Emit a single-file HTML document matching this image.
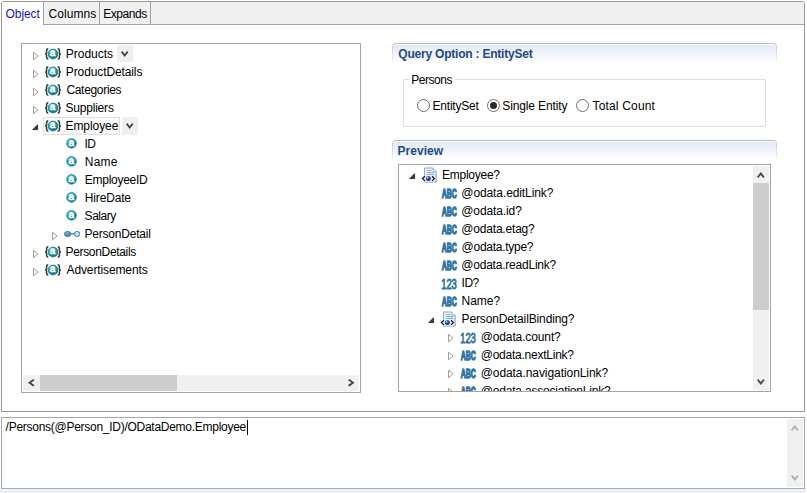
<!DOCTYPE html>
<html><head><meta charset="utf-8"><title>OData Query Designer</title>
<style>
*{box-sizing:border-box;margin:0;padding:0}
html,body{width:807px;height:493px;overflow:hidden;background:#fff}
body{position:relative;font-family:"Liberation Sans",sans-serif;font-size:12px;color:#000}
.abs{position:absolute}
svg{display:block;overflow:visible}
#pane{left:1px;top:1px;width:804px;height:411px;background:#fff;border:1px solid #979797;border-radius:3px 3px 0 0}
#strip{left:2px;top:2px;width:802px;height:23px;background:#f0f0f0;border-bottom:1px solid #a0a0a0;border-radius:2px 2px 0 0}
.tab{position:absolute;top:2px;height:22px;background:#f0f0f0;border-right:1px solid #a0a0a0}
.tab.sel{background:#fff;height:23px;border-radius:2px 0 0 0}
.box{position:absolute;background:#fff;border:1px solid #a3a3a3}
.t{position:absolute;white-space:nowrap;line-height:18px;height:18px;font-size:12px}
.hdr{position:absolute;height:21px;border-top:1px solid #b4bfcd;border-radius:4px 4px 0 0;background:linear-gradient(#e2e9f5 0%,#eef2f9 45%,#ffffff 95%);box-shadow:inset 0 1px 0 rgba(255,255,255,.8)}
.hdr:before,.hdr:after{content:"";position:absolute;top:2px;width:1px;height:18px;background:linear-gradient(#c3cedd,#dfe6f0 60%,rgba(255,255,255,0))}
.hdr:before{left:0}.hdr:after{right:0}
.b{font-weight:bold;color:#1d4a86}
.sb{position:absolute;background:#f0f0f0}
.th{position:absolute;background:#cdcdcd}
.dd{position:absolute;width:16px;height:17px;background:#efefef}
.radio{position:absolute;width:13px;height:13px;border:1px solid #6e6e6e;border-radius:50%;background:#fff}
.radio i{position:absolute;left:2px;top:2px;width:7px;height:7px;border-radius:50%;background:#2a2a2a}
#bottom{left:0;top:489px;width:807px;height:4px;background:linear-gradient(#f8f9fc 0,#f8f9fc 1px,#eceff7 1px,#eceff7 100%)}
</style></head><body>
<svg width="0" height="0" style="position:absolute"><defs>
<radialGradient id="gT" cx="0.4" cy="0.3" r="0.75"><stop offset="0" stop-color="#62c8cf"/><stop offset="0.55" stop-color="#2397a4"/><stop offset="1" stop-color="#0e6874"/></radialGradient>
<radialGradient id="gB" cx="0.4" cy="0.3" r="0.75"><stop offset="0" stop-color="#6fd0dc"/><stop offset="0.55" stop-color="#2a9fb4"/><stop offset="1" stop-color="#156f86"/></radialGradient>
<radialGradient id="gN" cx="0.4" cy="0.3" r="0.75"><stop offset="0" stop-color="#7ab6dc"/><stop offset="1" stop-color="#2f75a8"/></radialGradient>
<radialGradient id="gD" cx="0.35" cy="0.3" r="0.8"><stop offset="0" stop-color="#a9c4e6"/><stop offset="0.45" stop-color="#27508f"/><stop offset="1" stop-color="#0b2555"/></radialGradient>
<linearGradient id="gP" x1="0" y1="0" x2="1" y2="1"><stop offset="0" stop-color="#f8fafd"/><stop offset="1" stop-color="#d6e3f4"/></linearGradient>
</defs></svg>
<div id="pane" class="abs"></div><div id="strip" class="abs"></div>
<div class="tab sel" style="left:2px;width:42px"></div>
<div class="tab" style="left:44px;width:56px"></div>
<div class="tab" style="left:100px;width:51px"></div>
<span class="t" id="tab0" style="left:5.6px;top:5px;letter-spacing:-0.100px;color:#1414c8">Object</span>
<span class="t" id="tab1" style="left:48.6px;top:5px;letter-spacing:0.033px;">Columns</span>
<span class="t" id="tab2" style="left:103.2px;top:5px;letter-spacing:-0.450px;">Expands</span>
<div class="box" style="left:21px;top:43px;width:340px;height:350px"></div>
<div class="abs" style="left:43px;top:117px;width:77px;height:18px;background:#fafafa;border:1px solid #dfdfdf"></div>
<div class="dd" style="left:117px;top:45px"></div><svg class="abs" style="left:120.7px;top:51px" width="7.4" height="6" viewBox="0 0 7.4 6"><polygon points="0.00,1.35 1.35,0.00 3.70,3.00 6.05,0.00 7.40,1.35 3.70,6.00" fill="#454545"/></svg>
<div class="dd" style="left:122px;top:117px;height:18px"></div><svg class="abs" style="left:125.7px;top:123px" width="7.4" height="6" viewBox="0 0 7.4 6"><polygon points="0.00,1.35 1.35,0.00 3.70,3.00 6.05,0.00 7.40,1.35 3.70,6.00" fill="#454545"/></svg>
<svg class="abs" style="left:32px;top:50.5px" width="8" height="10" viewBox="0 0 8 10"><path d="M1.5 1.2 L6 5 L1.5 8.8 Z" fill="#fff" stroke="#9c9c9c" stroke-width="1"/></svg>
<svg class="abs" style="left:44px;top:47px" width="18" height="14" viewBox="0 0 18 14"><path d="M4.3 1.9 Q2.6 1.9 2.6 3.4 L2.6 5.4 Q2.6 6.8 1.2 7 Q2.6 7.2 2.6 8.6 L2.6 10.6 Q2.6 12.1 4.3 12.1" fill="none" stroke="#36434e" stroke-width="1.6"/><path d="M13.7 1.9 Q15.4 1.9 15.4 3.4 L15.4 5.4 Q15.4 6.8 16.8 7 Q15.4 7.2 15.4 8.6 L15.4 10.6 Q15.4 12.1 13.7 12.1" fill="none" stroke="#36434e" stroke-width="1.6"/><circle cx="9" cy="7" r="5.4" fill="#d8f1f4"/><circle cx="9" cy="7" r="4.95" fill="url(#gT)" stroke="#137582" stroke-width="0.6"/><text x="8.6" y="9.3" font-family="Liberation Sans,sans-serif" font-size="10" font-weight="normal" stroke="#fff" stroke-width="0.55" fill="#fff" text-anchor="middle" text-rendering="geometricPrecision">a</text></svg>
<span class="t" id="l0" style="left:65.8px;top:45px;letter-spacing:-0.014px;">Products</span>
<svg class="abs" style="left:32px;top:68.5px" width="8" height="10" viewBox="0 0 8 10"><path d="M1.5 1.2 L6 5 L1.5 8.8 Z" fill="#fff" stroke="#9c9c9c" stroke-width="1"/></svg>
<svg class="abs" style="left:44px;top:65px" width="18" height="14" viewBox="0 0 18 14"><path d="M4.3 1.9 Q2.6 1.9 2.6 3.4 L2.6 5.4 Q2.6 6.8 1.2 7 Q2.6 7.2 2.6 8.6 L2.6 10.6 Q2.6 12.1 4.3 12.1" fill="none" stroke="#36434e" stroke-width="1.6"/><path d="M13.7 1.9 Q15.4 1.9 15.4 3.4 L15.4 5.4 Q15.4 6.8 16.8 7 Q15.4 7.2 15.4 8.6 L15.4 10.6 Q15.4 12.1 13.7 12.1" fill="none" stroke="#36434e" stroke-width="1.6"/><circle cx="9" cy="7" r="5.4" fill="#d8f1f4"/><circle cx="9" cy="7" r="4.95" fill="url(#gT)" stroke="#137582" stroke-width="0.6"/><text x="8.6" y="9.3" font-family="Liberation Sans,sans-serif" font-size="10" font-weight="normal" stroke="#fff" stroke-width="0.55" fill="#fff" text-anchor="middle" text-rendering="geometricPrecision">a</text></svg>
<span class="t" id="l1" style="left:65.8px;top:63px;letter-spacing:-0.108px;">ProductDetails</span>
<svg class="abs" style="left:32px;top:86.5px" width="8" height="10" viewBox="0 0 8 10"><path d="M1.5 1.2 L6 5 L1.5 8.8 Z" fill="#fff" stroke="#9c9c9c" stroke-width="1"/></svg>
<svg class="abs" style="left:44px;top:83px" width="18" height="14" viewBox="0 0 18 14"><path d="M4.3 1.9 Q2.6 1.9 2.6 3.4 L2.6 5.4 Q2.6 6.8 1.2 7 Q2.6 7.2 2.6 8.6 L2.6 10.6 Q2.6 12.1 4.3 12.1" fill="none" stroke="#36434e" stroke-width="1.6"/><path d="M13.7 1.9 Q15.4 1.9 15.4 3.4 L15.4 5.4 Q15.4 6.8 16.8 7 Q15.4 7.2 15.4 8.6 L15.4 10.6 Q15.4 12.1 13.7 12.1" fill="none" stroke="#36434e" stroke-width="1.6"/><circle cx="9" cy="7" r="5.4" fill="#d8f1f4"/><circle cx="9" cy="7" r="4.95" fill="url(#gT)" stroke="#137582" stroke-width="0.6"/><text x="8.6" y="9.3" font-family="Liberation Sans,sans-serif" font-size="10" font-weight="normal" stroke="#fff" stroke-width="0.55" fill="#fff" text-anchor="middle" text-rendering="geometricPrecision">a</text></svg>
<span class="t" id="l2" style="left:66.4px;top:81px;letter-spacing:-0.311px;">Categories</span>
<svg class="abs" style="left:32px;top:104.5px" width="8" height="10" viewBox="0 0 8 10"><path d="M1.5 1.2 L6 5 L1.5 8.8 Z" fill="#fff" stroke="#9c9c9c" stroke-width="1"/></svg>
<svg class="abs" style="left:44px;top:101px" width="18" height="14" viewBox="0 0 18 14"><path d="M4.3 1.9 Q2.6 1.9 2.6 3.4 L2.6 5.4 Q2.6 6.8 1.2 7 Q2.6 7.2 2.6 8.6 L2.6 10.6 Q2.6 12.1 4.3 12.1" fill="none" stroke="#36434e" stroke-width="1.6"/><path d="M13.7 1.9 Q15.4 1.9 15.4 3.4 L15.4 5.4 Q15.4 6.8 16.8 7 Q15.4 7.2 15.4 8.6 L15.4 10.6 Q15.4 12.1 13.7 12.1" fill="none" stroke="#36434e" stroke-width="1.6"/><circle cx="9" cy="7" r="5.4" fill="#d8f1f4"/><circle cx="9" cy="7" r="4.95" fill="url(#gT)" stroke="#137582" stroke-width="0.6"/><text x="8.6" y="9.3" font-family="Liberation Sans,sans-serif" font-size="10" font-weight="normal" stroke="#fff" stroke-width="0.55" fill="#fff" text-anchor="middle" text-rendering="geometricPrecision">a</text></svg>
<span class="t" id="l3" style="left:65.4px;top:99px;letter-spacing:-0.188px;">Suppliers</span>
<svg class="abs" style="left:32px;top:123.8px" width="7" height="7" viewBox="0 0 7 7"><path d="M5.6 0.8 L5.6 5.6 L0.8 5.6 Z" fill="#404040" stroke="#262626" stroke-width="0.9" stroke-linejoin="round"/></svg>
<svg class="abs" style="left:44px;top:119px" width="18" height="14" viewBox="0 0 18 14"><path d="M4.3 1.9 Q2.6 1.9 2.6 3.4 L2.6 5.4 Q2.6 6.8 1.2 7 Q2.6 7.2 2.6 8.6 L2.6 10.6 Q2.6 12.1 4.3 12.1" fill="none" stroke="#36434e" stroke-width="1.6"/><path d="M13.7 1.9 Q15.4 1.9 15.4 3.4 L15.4 5.4 Q15.4 6.8 16.8 7 Q15.4 7.2 15.4 8.6 L15.4 10.6 Q15.4 12.1 13.7 12.1" fill="none" stroke="#36434e" stroke-width="1.6"/><circle cx="9" cy="7" r="5.4" fill="#d8f1f4"/><circle cx="9" cy="7" r="4.95" fill="url(#gT)" stroke="#137582" stroke-width="0.6"/><text x="8.6" y="9.3" font-family="Liberation Sans,sans-serif" font-size="10" font-weight="normal" stroke="#fff" stroke-width="0.55" fill="#fff" text-anchor="middle" text-rendering="geometricPrecision">a</text></svg>
<span class="t" id="l4" style="left:65.5px;top:117px;letter-spacing:-0.071px;">Employee</span>
<svg class="abs" style="left:66px;top:138px" width="12" height="12" viewBox="0 0 12 12"><circle cx="5.55" cy="5.35" r="5.5" fill="#e2f4f8"/><circle cx="5.55" cy="5.35" r="4.9" fill="url(#gB)" stroke="#1b7f93" stroke-width="0.6"/><text x="5.4" y="8.0" font-family="Liberation Sans,sans-serif" font-size="10" font-weight="normal" stroke="#fff" stroke-width="0.55" fill="#fff" text-anchor="middle" text-rendering="geometricPrecision">a</text></svg>
<span class="t" id="l5" style="left:84.4px;top:135px;letter-spacing:-0.450px;">ID</span>
<svg class="abs" style="left:66px;top:156px" width="12" height="12" viewBox="0 0 12 12"><circle cx="5.55" cy="5.35" r="5.5" fill="#e2f4f8"/><circle cx="5.55" cy="5.35" r="4.9" fill="url(#gB)" stroke="#1b7f93" stroke-width="0.6"/><text x="5.4" y="8.0" font-family="Liberation Sans,sans-serif" font-size="10" font-weight="normal" stroke="#fff" stroke-width="0.55" fill="#fff" text-anchor="middle" text-rendering="geometricPrecision">a</text></svg>
<span class="t" id="l6" style="left:84.8px;top:153px;letter-spacing:0.167px;">Name</span>
<svg class="abs" style="left:66px;top:174px" width="12" height="12" viewBox="0 0 12 12"><circle cx="5.55" cy="5.35" r="5.5" fill="#e2f4f8"/><circle cx="5.55" cy="5.35" r="4.9" fill="url(#gB)" stroke="#1b7f93" stroke-width="0.6"/><text x="5.4" y="8.0" font-family="Liberation Sans,sans-serif" font-size="10" font-weight="normal" stroke="#fff" stroke-width="0.55" fill="#fff" text-anchor="middle" text-rendering="geometricPrecision">a</text></svg>
<span class="t" id="l7" style="left:84.8px;top:171px;letter-spacing:-0.267px;">EmployeeID</span>
<svg class="abs" style="left:66px;top:192px" width="12" height="12" viewBox="0 0 12 12"><circle cx="5.55" cy="5.35" r="5.5" fill="#e2f4f8"/><circle cx="5.55" cy="5.35" r="4.9" fill="url(#gB)" stroke="#1b7f93" stroke-width="0.6"/><text x="5.4" y="8.0" font-family="Liberation Sans,sans-serif" font-size="10" font-weight="normal" stroke="#fff" stroke-width="0.55" fill="#fff" text-anchor="middle" text-rendering="geometricPrecision">a</text></svg>
<span class="t" id="l8" style="left:84.8px;top:189px;letter-spacing:-0.157px;">HireDate</span>
<svg class="abs" style="left:66px;top:210px" width="12" height="12" viewBox="0 0 12 12"><circle cx="5.55" cy="5.35" r="5.5" fill="#e2f4f8"/><circle cx="5.55" cy="5.35" r="4.9" fill="url(#gB)" stroke="#1b7f93" stroke-width="0.6"/><text x="5.4" y="8.0" font-family="Liberation Sans,sans-serif" font-size="10" font-weight="normal" stroke="#fff" stroke-width="0.55" fill="#fff" text-anchor="middle" text-rendering="geometricPrecision">a</text></svg>
<span class="t" id="l9" style="left:84.6px;top:207px;letter-spacing:-0.450px;">Salary</span>
<svg class="abs" style="left:51px;top:230.5px" width="8" height="10" viewBox="0 0 8 10"><path d="M1.5 1.2 L6 5 L1.5 8.8 Z" fill="#fff" stroke="#9c9c9c" stroke-width="1"/></svg>
<svg class="abs" style="left:64px;top:230px" width="17" height="8" viewBox="0 0 17 8"><path d="M6 3.8 H11" stroke="#3a7fb0" stroke-width="1.3"/><ellipse cx="3.6" cy="3.95" rx="3.2" ry="2.7" fill="url(#gN)" stroke="#2d6fa0" stroke-width="0.6"/><rect x="10.6" y="1.5" width="5" height="4.9" rx="2" fill="#bfe1f8" stroke="#3a7aaa" stroke-width="1"/></svg>
<span class="t" id="l10" style="left:84.6px;top:225px;letter-spacing:-0.227px;">PersonDetail</span>
<svg class="abs" style="left:32px;top:248.5px" width="8" height="10" viewBox="0 0 8 10"><path d="M1.5 1.2 L6 5 L1.5 8.8 Z" fill="#fff" stroke="#9c9c9c" stroke-width="1"/></svg>
<svg class="abs" style="left:44px;top:245px" width="18" height="14" viewBox="0 0 18 14"><path d="M4.3 1.9 Q2.6 1.9 2.6 3.4 L2.6 5.4 Q2.6 6.8 1.2 7 Q2.6 7.2 2.6 8.6 L2.6 10.6 Q2.6 12.1 4.3 12.1" fill="none" stroke="#36434e" stroke-width="1.6"/><path d="M13.7 1.9 Q15.4 1.9 15.4 3.4 L15.4 5.4 Q15.4 6.8 16.8 7 Q15.4 7.2 15.4 8.6 L15.4 10.6 Q15.4 12.1 13.7 12.1" fill="none" stroke="#36434e" stroke-width="1.6"/><circle cx="9" cy="7" r="5.4" fill="#d8f1f4"/><circle cx="9" cy="7" r="4.95" fill="url(#gT)" stroke="#137582" stroke-width="0.6"/><text x="8.6" y="9.3" font-family="Liberation Sans,sans-serif" font-size="10" font-weight="normal" stroke="#fff" stroke-width="0.55" fill="#fff" text-anchor="middle" text-rendering="geometricPrecision">a</text></svg>
<span class="t" id="l11" style="left:65.5px;top:243px;letter-spacing:-0.325px;">PersonDetails</span>
<svg class="abs" style="left:32px;top:266.5px" width="8" height="10" viewBox="0 0 8 10"><path d="M1.5 1.2 L6 5 L1.5 8.8 Z" fill="#fff" stroke="#9c9c9c" stroke-width="1"/></svg>
<svg class="abs" style="left:44px;top:263px" width="18" height="14" viewBox="0 0 18 14"><path d="M4.3 1.9 Q2.6 1.9 2.6 3.4 L2.6 5.4 Q2.6 6.8 1.2 7 Q2.6 7.2 2.6 8.6 L2.6 10.6 Q2.6 12.1 4.3 12.1" fill="none" stroke="#36434e" stroke-width="1.6"/><path d="M13.7 1.9 Q15.4 1.9 15.4 3.4 L15.4 5.4 Q15.4 6.8 16.8 7 Q15.4 7.2 15.4 8.6 L15.4 10.6 Q15.4 12.1 13.7 12.1" fill="none" stroke="#36434e" stroke-width="1.6"/><circle cx="9" cy="7" r="5.4" fill="#d8f1f4"/><circle cx="9" cy="7" r="4.95" fill="url(#gT)" stroke="#137582" stroke-width="0.6"/><text x="8.6" y="9.3" font-family="Liberation Sans,sans-serif" font-size="10" font-weight="normal" stroke="#fff" stroke-width="0.55" fill="#fff" text-anchor="middle" text-rendering="geometricPrecision">a</text></svg>
<span class="t" id="l12" style="left:66.5px;top:261px;letter-spacing:-0.115px;">Advertisements</span>
<div class="sb" style="left:23px;top:375px;width:336px;height:16px"></div><div class="th" style="left:40px;top:375px;width:137px;height:16px"></div>
<svg class="abs" style="left:27.9px;top:378.8px" width="6.5" height="7.4" viewBox="0 0 6.5 7.4"><polygon points="5.15,0.00 6.50,1.35 3.00,3.70 6.50,6.05 5.15,7.40 0.00,3.70" fill="#444444"/></svg>
<svg class="abs" style="left:347.8px;top:378.8px" width="6.5" height="7.4" viewBox="0 0 6.5 7.4"><polygon points="1.35,0.00 0.00,1.35 3.50,3.70 0.00,6.05 1.35,7.40 6.50,3.70" fill="#444444"/></svg>
<div class="hdr" style="left:392px;top:43px;width:385px"></div>
<span class="t" id="h0" style="left:398.3px;top:45px;letter-spacing:-0.217px;font-weight:bold;color:#1d4a86">Query Option : EntitySet</span>
<div class="abs" style="left:403px;top:79px;width:363px;height:48px;border:1px solid #dedede;border-radius:1px"></div>
<div class="abs" style="left:409px;top:78px;width:46px;height:4px;background:#fff"></div>
<span class="t" id="g0" style="left:411.2px;top:71px;letter-spacing:-0.450px;">Persons</span>
<div class="radio" style="left:417px;top:99px"></div>
<span class="t" id="r0" style="left:432.6px;top:97px;letter-spacing:-0.225px;">EntitySet</span>
<div class="radio" style="left:487px;top:99px"><i></i></div>
<span class="t" id="r1" style="left:502.3px;top:97px;letter-spacing:-0.133px;">Single Entity</span>
<div class="radio" style="left:576px;top:99px"></div>
<span class="t" id="r2" style="left:592.5px;top:97px;letter-spacing:0.170px;">Total Count</span>
<div class="hdr" style="left:392px;top:140px;width:385px"></div>
<span class="t" id="h1" style="left:397.4px;top:142px;letter-spacing:0.067px;font-weight:bold;color:#1d4a86">Preview</span>
<div class="box" style="left:398px;top:164px;width:373px;height:228px;overflow:hidden" id="pv">
<svg class="abs" style="left:10px;top:8.100000000000001px" width="7" height="7" viewBox="0 0 7 7"><path d="M5.6 0.8 L5.6 5.6 L0.8 5.6 Z" fill="#404040" stroke="#262626" stroke-width="0.9" stroke-linejoin="round"/></svg>
<svg class="abs" style="left:22.0px;top:2px" width="17" height="17" viewBox="0 0 17 17"><path d="M3.6 1 H12 L15.2 4.2 V15.1 H3.6 Z" fill="url(#gP)" stroke="#8aa3c9" stroke-width="1"/><path d="M12 1 V4.2 H15.2" fill="#fff" stroke="#8aa3c9" stroke-width="0.8"/><path d="M5.6 3.5 H10.5 M5.6 5.5 H13.2 M5.6 7.4 H13.2" stroke="#7ea6de" stroke-width="0.9"/><rect x="1" y="8.6" width="13" height="6" fill="#eef4fb" opacity="0.85"/><circle cx="7.3" cy="11.6" r="2.5" fill="url(#gD)"/><path d="M3.9 9.3 L1.5 11.6 L3.9 13.9 M11 9.3 L13.4 11.6 L11 13.9" fill="none" stroke="#111" stroke-width="1.25"/></svg>
<span class="t" id="p0" style="left:43.0px;top:1px;letter-spacing:-0.250px;">Employee?</span>
<svg class="abs" style="left:42px;top:23px" width="18" height="12" viewBox="0 0 18 12"><text x="0.8" y="10.4" font-family="Liberation Sans,sans-serif" font-size="12.6" font-weight="bold" fill="#3576a4" stroke="#3576a4" stroke-width="1.4" stroke-linejoin="round" textLength="15" lengthAdjust="spacingAndGlyphs">ABC</text></svg>
<span class="t" id="p1" style="left:62.3px;top:19px;letter-spacing:-0.100px;">@odata.editLink?</span>
<svg class="abs" style="left:42px;top:41px" width="18" height="12" viewBox="0 0 18 12"><text x="0.8" y="10.4" font-family="Liberation Sans,sans-serif" font-size="12.6" font-weight="bold" fill="#3576a4" stroke="#3576a4" stroke-width="1.4" stroke-linejoin="round" textLength="15" lengthAdjust="spacingAndGlyphs">ABC</text></svg>
<span class="t" id="p2" style="left:62.3px;top:37px;letter-spacing:-0.111px;">@odata.id?</span>
<svg class="abs" style="left:42px;top:59px" width="18" height="12" viewBox="0 0 18 12"><text x="0.8" y="10.4" font-family="Liberation Sans,sans-serif" font-size="12.6" font-weight="bold" fill="#3576a4" stroke="#3576a4" stroke-width="1.4" stroke-linejoin="round" textLength="15" lengthAdjust="spacingAndGlyphs">ABC</text></svg>
<span class="t" id="p3" style="left:62.3px;top:55px;letter-spacing:-0.191px;">@odata.etag?</span>
<svg class="abs" style="left:42px;top:77px" width="18" height="12" viewBox="0 0 18 12"><text x="0.8" y="10.4" font-family="Liberation Sans,sans-serif" font-size="12.6" font-weight="bold" fill="#3576a4" stroke="#3576a4" stroke-width="1.4" stroke-linejoin="round" textLength="15" lengthAdjust="spacingAndGlyphs">ABC</text></svg>
<span class="t" id="p4" style="left:62.6px;top:73px;letter-spacing:-0.273px;">@odata.type?</span>
<svg class="abs" style="left:42px;top:95px" width="18" height="12" viewBox="0 0 18 12"><text x="0.8" y="10.4" font-family="Liberation Sans,sans-serif" font-size="12.6" font-weight="bold" fill="#3576a4" stroke="#3576a4" stroke-width="1.4" stroke-linejoin="round" textLength="15" lengthAdjust="spacingAndGlyphs">ABC</text></svg>
<span class="t" id="p5" style="left:62.3px;top:91px;letter-spacing:-0.220px;">@odata.readLink?</span>
<svg class="abs" style="left:42px;top:113px" width="18" height="12" viewBox="0 0 18 12"><text x="0.2" y="10.7" font-family="Liberation Sans,sans-serif" font-size="14" fill="#35779b" stroke="#35779b" stroke-width="0.9" textLength="15.6" lengthAdjust="spacingAndGlyphs">123</text></svg>
<span class="t" id="p6" style="left:62.5px;top:109px;letter-spacing:-0.450px;">ID?</span>
<svg class="abs" style="left:42px;top:131px" width="18" height="12" viewBox="0 0 18 12"><text x="0.8" y="10.4" font-family="Liberation Sans,sans-serif" font-size="12.6" font-weight="bold" fill="#3576a4" stroke="#3576a4" stroke-width="1.4" stroke-linejoin="round" textLength="15" lengthAdjust="spacingAndGlyphs">ABC</text></svg>
<span class="t" id="p7" style="left:62.5px;top:127px;letter-spacing:0.000px;">Name?</span>
<svg class="abs" style="left:29px;top:152.10000000000002px" width="7" height="7" viewBox="0 0 7 7"><path d="M5.6 0.8 L5.6 5.6 L0.8 5.6 Z" fill="#404040" stroke="#262626" stroke-width="0.9" stroke-linejoin="round"/></svg>
<svg class="abs" style="left:40.5px;top:146px" width="17" height="17" viewBox="0 0 17 17"><path d="M3.6 1 H12 L15.2 4.2 V15.1 H3.6 Z" fill="url(#gP)" stroke="#8aa3c9" stroke-width="1"/><path d="M12 1 V4.2 H15.2" fill="#fff" stroke="#8aa3c9" stroke-width="0.8"/><path d="M5.6 3.5 H10.5 M5.6 5.5 H13.2 M5.6 7.4 H13.2" stroke="#7ea6de" stroke-width="0.9"/><rect x="1" y="8.6" width="13" height="6" fill="#eef4fb" opacity="0.85"/><circle cx="7.3" cy="11.6" r="2.5" fill="url(#gD)"/><path d="M3.9 9.3 L1.5 11.6 L3.9 13.9 M11 9.3 L13.4 11.6 L11 13.9" fill="none" stroke="#111" stroke-width="1.25"/></svg>
<span class="t" id="p8" style="left:62.5px;top:145px;letter-spacing:-0.126px;">PersonDetailBinding?</span>
<svg class="abs" style="left:48px;top:168.3px" width="8" height="10" viewBox="0 0 8 10"><path d="M1.5 1.2 L6 5 L1.5 8.8 Z" fill="#fff" stroke="#9c9c9c" stroke-width="1"/></svg>
<svg class="abs" style="left:61px;top:167px" width="18" height="12" viewBox="0 0 18 12"><text x="0.2" y="10.7" font-family="Liberation Sans,sans-serif" font-size="14" fill="#35779b" stroke="#35779b" stroke-width="0.9" textLength="15.6" lengthAdjust="spacingAndGlyphs">123</text></svg>
<span class="t" id="p9" style="left:81.7px;top:163px;letter-spacing:-0.125px;">@odata.count?</span>
<svg class="abs" style="left:48px;top:186.3px" width="8" height="10" viewBox="0 0 8 10"><path d="M1.5 1.2 L6 5 L1.5 8.8 Z" fill="#fff" stroke="#9c9c9c" stroke-width="1"/></svg>
<svg class="abs" style="left:61px;top:185px" width="18" height="12" viewBox="0 0 18 12"><text x="0.8" y="10.4" font-family="Liberation Sans,sans-serif" font-size="12.6" font-weight="bold" fill="#3576a4" stroke="#3576a4" stroke-width="1.4" stroke-linejoin="round" textLength="15" lengthAdjust="spacingAndGlyphs">ABC</text></svg>
<span class="t" id="p10" style="left:81.7px;top:181px;letter-spacing:-0.240px;">@odata.nextLink?</span>
<svg class="abs" style="left:48px;top:204.3px" width="8" height="10" viewBox="0 0 8 10"><path d="M1.5 1.2 L6 5 L1.5 8.8 Z" fill="#fff" stroke="#9c9c9c" stroke-width="1"/></svg>
<svg class="abs" style="left:61px;top:203px" width="18" height="12" viewBox="0 0 18 12"><text x="0.8" y="10.4" font-family="Liberation Sans,sans-serif" font-size="12.6" font-weight="bold" fill="#3576a4" stroke="#3576a4" stroke-width="1.4" stroke-linejoin="round" textLength="15" lengthAdjust="spacingAndGlyphs">ABC</text></svg>
<span class="t" id="p11" style="left:81.7px;top:199px;letter-spacing:-0.071px;">@odata.navigationLink?</span>
<svg class="abs" style="left:48px;top:222.3px" width="8" height="10" viewBox="0 0 8 10"><path d="M1.5 1.2 L6 5 L1.5 8.8 Z" fill="#fff" stroke="#9c9c9c" stroke-width="1"/></svg>
<svg class="abs" style="left:61px;top:221px" width="18" height="12" viewBox="0 0 18 12"><text x="0.8" y="10.4" font-family="Liberation Sans,sans-serif" font-size="12.6" font-weight="bold" fill="#3576a4" stroke="#3576a4" stroke-width="1.4" stroke-linejoin="round" textLength="15" lengthAdjust="spacingAndGlyphs">ABC</text></svg>
<span class="t" id="p12" style="left:81.7px;top:217px;letter-spacing:-0.191px;">@odata.associationLink?</span>
</div>
<div class="sb" style="left:753px;top:166px;width:16px;height:224px"></div><div class="th" style="left:753px;top:183px;width:16px;height:127px"></div>
<svg class="abs" style="left:756.9px;top:172px" width="7.6" height="6.0" viewBox="0 0 7.6 6.0"><polygon points="0.00,4.65 1.35,6.00 3.80,3.00 6.25,6.00 7.60,4.65 3.80,0.00" fill="#484848"/></svg>
<svg class="abs" style="left:756.9px;top:378.8px" width="7.6" height="6.0" viewBox="0 0 7.6 6.0"><polygon points="0.00,1.35 1.35,0.00 3.80,3.00 6.25,0.00 7.60,1.35 3.80,6.00" fill="#484848"/></svg>
<div class="box" style="left:1px;top:417px;width:804px;height:72px;border-color:#a5a7af"></div>
<div class="sb" style="left:787px;top:419px;width:16px;height:68px"></div>
<svg class="abs" style="left:790.8px;top:425px" width="7.6" height="6.0" viewBox="0 0 7.6 6.0"><polygon points="0.00,4.65 1.35,6.00 3.80,3.00 6.25,6.00 7.60,4.65 3.80,0.00" fill="#adadad"/></svg>
<svg class="abs" style="left:790.8px;top:475.2px" width="7.6" height="6.0" viewBox="0 0 7.6 6.0"><polygon points="0.00,1.35 1.35,0.00 3.80,3.00 6.25,0.00 7.60,1.35 3.80,6.00" fill="#adadad"/></svg>
<span class="t" id="q" style="left:5.6px;top:418px;letter-spacing:-0.271px;">/Persons(@Person_ID)/ODataDemo.Employee</span>
<div class="abs" style="left:247px;top:420px;width:1px;height:15px;background:#000"></div>
<div id="bottom" class="abs"></div>
</body></html>
